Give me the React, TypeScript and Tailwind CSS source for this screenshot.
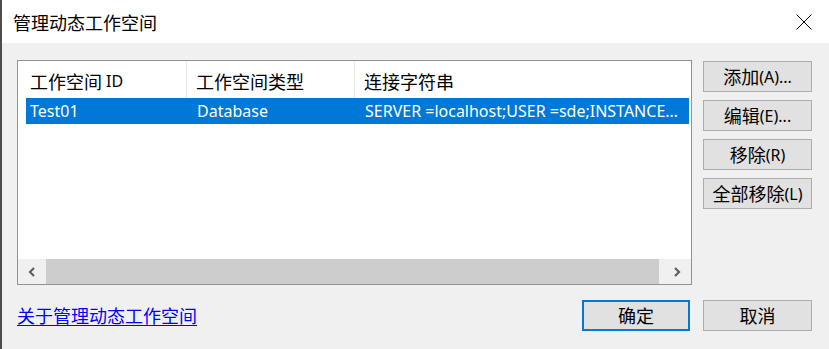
const cjk = "font-['Noto_Sans_CJK_SC',sans-serif] text-[18px]";
const latin = "font-['Noto_Sans','Noto_Sans_CJK_SC',sans-serif] text-[16px]";

const sideButtons = [
  { label: "添加", key: "(A)..." },
  { label: "编辑", key: "(E)..." },
  { label: "移除", key: "(R)" },
  { label: "全部移除", key: "(L)" },
];

function Chevron({ dir }: { dir: "left" | "right" }) {
  return (
    <svg width="10" height="10" viewBox="0 0 10 10">
      <polyline
        points={dir === "left" ? "7,1 3,5 7,9" : "3,1 7,5 3,9"}
        fill="none"
        stroke="#606060"
        strokeWidth="2.2"
      />
    </svg>
  );
}

function WinButton({
  children,
  primary,
  width,
}: {
  children: React.ReactNode;
  primary?: boolean;
  width: string;
}) {
  return (
    <div
      className={`flex h-[31px] items-center justify-center bg-[#e1e1e1] text-black ${width} ${
        primary ? "border-2 border-[#0078d7]" : "border border-[#adadad]"
      }`}
    >
      {children}
    </div>
  );
}

export default function App() {
  return (
    <div className="flex h-[349px] w-[829px] flex-col border-l-2 border-[#4d4d4d] bg-[#f0f0f0]">
      {/* Title bar */}
      <div className="flex h-[43px] items-center justify-between bg-white pl-[11px] pr-[17px]">
        <span className={`${cjk} leading-none text-black`}>管理动态工作空间</span>
        <svg width="16" height="16" viewBox="0 0 16 16">
          <path d="M0.5 0.5 L15.5 15.5 M15.5 0.5 L0.5 15.5" stroke="#000" strokeWidth="1" />
        </svg>
      </div>

      <div className="flex flex-1 flex-col pl-[15px] pr-[17px] pt-[17px]">
        <div className="flex gap-[11px]">
          {/* List view */}
          <div className="flex h-[225px] w-[675px] flex-col border border-[#8f9296] bg-white">
            <div className="flex h-[37px] text-black">
              <div className="flex w-[169px] items-center border-r border-[#e5e5e5] pl-[12px] pt-[3px]">
                <span className={cjk}>工作空间</span>
                <span className={`${latin} ml-[4px]`}>ID</span>
              </div>
              <div className={`flex w-[168px] items-center border-r border-[#e5e5e5] pl-[9px] pt-[3px] ${cjk}`}>
                工作空间类型
              </div>
              <div className={`flex flex-1 items-center pl-[9px] pt-[3px] ${cjk}`}>连接字符串</div>
            </div>
            <div className={`ml-[8px] mr-[2px] flex h-[26px] items-center bg-[#0078d7] text-white ${latin}`}>
              <span className="w-[161px] pl-[4px]">Test01</span>
              <span className="w-[168px] pl-[10px]">Database</span>
              <span className="flex-1 truncate pl-[10px]">SERVER =localhost;USER =sde;INSTANCE…</span>
            </div>
            <div className="flex-1" />
            {/* Horizontal scrollbar */}
            <div className="flex h-[25px] bg-[#f0f0f0]">
              <div className="flex w-[28px] items-center justify-center">
                <Chevron dir="left" />
              </div>
              <div className="w-[613px] bg-[#cdcdcd]" />
              <div className="flex flex-1 items-center justify-center pl-[3px]">
                <Chevron dir="right" />
              </div>
            </div>
          </div>

          {/* Side buttons */}
          <div className="flex flex-col gap-[8px] pt-[1px]">
            {sideButtons.map((b) => (
              <WinButton key={b.label} width="w-[109px]">
                <span className={cjk}>{b.label}</span>
                <span className={latin}>{b.key}</span>
              </WinButton>
            ))}
          </div>
        </div>

        {/* Bottom row */}
        <div className="mt-[15px] flex items-center">
          <a href="#" className={`${cjk} text-[#0000ff] underline underline-offset-2`}>
            关于管理动态工作空间
          </a>
          <div className="ml-auto flex gap-[13px]">
            <WinButton primary width="w-[108px]">
              <span className={cjk}>确定</span>
            </WinButton>
            <WinButton width="w-[109px]">
              <span className={cjk}>取消</span>
            </WinButton>
          </div>
        </div>
      </div>
    </div>
  );
}
